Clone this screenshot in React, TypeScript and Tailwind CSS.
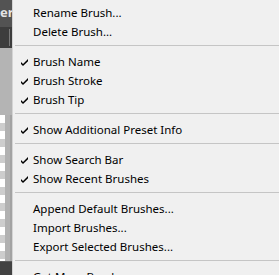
import React from 'react'

type Entry = { label: string; checked?: boolean } | 'sep'

const entries: Entry[] = [
  { label: 'Rename Brush...' },
  { label: 'Delete Brush...' },
  'sep',
  { label: 'Brush Name', checked: true },
  { label: 'Brush Stroke', checked: true },
  { label: 'Brush Tip', checked: true },
  'sep',
  { label: 'Show Additional Preset Info', checked: true },
  'sep',
  { label: 'Show Search Bar', checked: true },
  { label: 'Show Recent Brushes', checked: true },
  'sep',
  { label: 'Append Default Brushes...' },
  { label: 'Import Brushes...' },
  { label: 'Export Selected Brushes...' },
  'sep',
  { label: 'Get More Brushes...' },
]

function Check() {
  return (
    <svg width="8" height="7" viewBox="0 0 8 7" className="mt-[1px]">
      <polygon points="0,3 2,5 7,0 7,2.2 2,7 0,5" fill="#000" />
    </svg>
  )
}

function LeftStrip() {
  const squares = Array.from({ length: 19 })
  return (
    <div className="flex w-[12px] shrink-0 flex-col">
      <div className="flex h-[27px] items-center overflow-hidden bg-[#535353] pb-[2px] text-[13px] font-bold leading-none text-[#e4e4e4]">
        er
      </div>
      <div className="flex h-[21px] justify-end bg-[#3d3d3d] pr-[2px] pt-[2px]">
        <div className="h-[17px] w-[1px] bg-[#7a7a7a]" />
      </div>
      <div className="h-[67px] bg-[#b4b4b4]" />
      <div className="flex h-[146px]">
        <div className="flex w-[5px] flex-col overflow-hidden">
          {squares.map((_, i) => (
            <div key={i} className={`h-[8px] shrink-0 ${i % 2 === 0 ? 'bg-white' : 'bg-[#cdcdcd]'}`} />
          ))}
        </div>
        <div className="w-[5px] bg-[#b1b1b1]" />
        <div className="w-[2px] bg-[#a2a2a2]" />
      </div>
      <div className="flex-1 border-t border-[#5a5a5a] bg-[#424242]" />
    </div>
  )
}

export default function App() {
  return (
    <div className="flex h-[275px] w-[279px] overflow-hidden bg-[#f0f0f0]">
      <LeftStrip />
      <div className="flex-1 border-l border-[#d4d4d4] bg-[#f0f0f0] pt-[3px] font-['Noto_Sans',sans-serif] text-[11.5px] text-black">
        {entries.map((e, i) =>
          e === 'sep' ? (
            <div key={i} className="ml-[2px] pb-[6px] pt-[4px]">
              <div className="h-[1px] bg-[#c5c5c5]" />
            </div>
          ) : (
            <div key={i} className="flex h-[19px] items-center whitespace-nowrap leading-[19px]">
              <div className="flex w-[20px] justify-end pr-[4px]">{e.checked && <Check />}</div>
              <span>{e.label}</span>
            </div>
          )
        )}
      </div>
    </div>
  )
}
